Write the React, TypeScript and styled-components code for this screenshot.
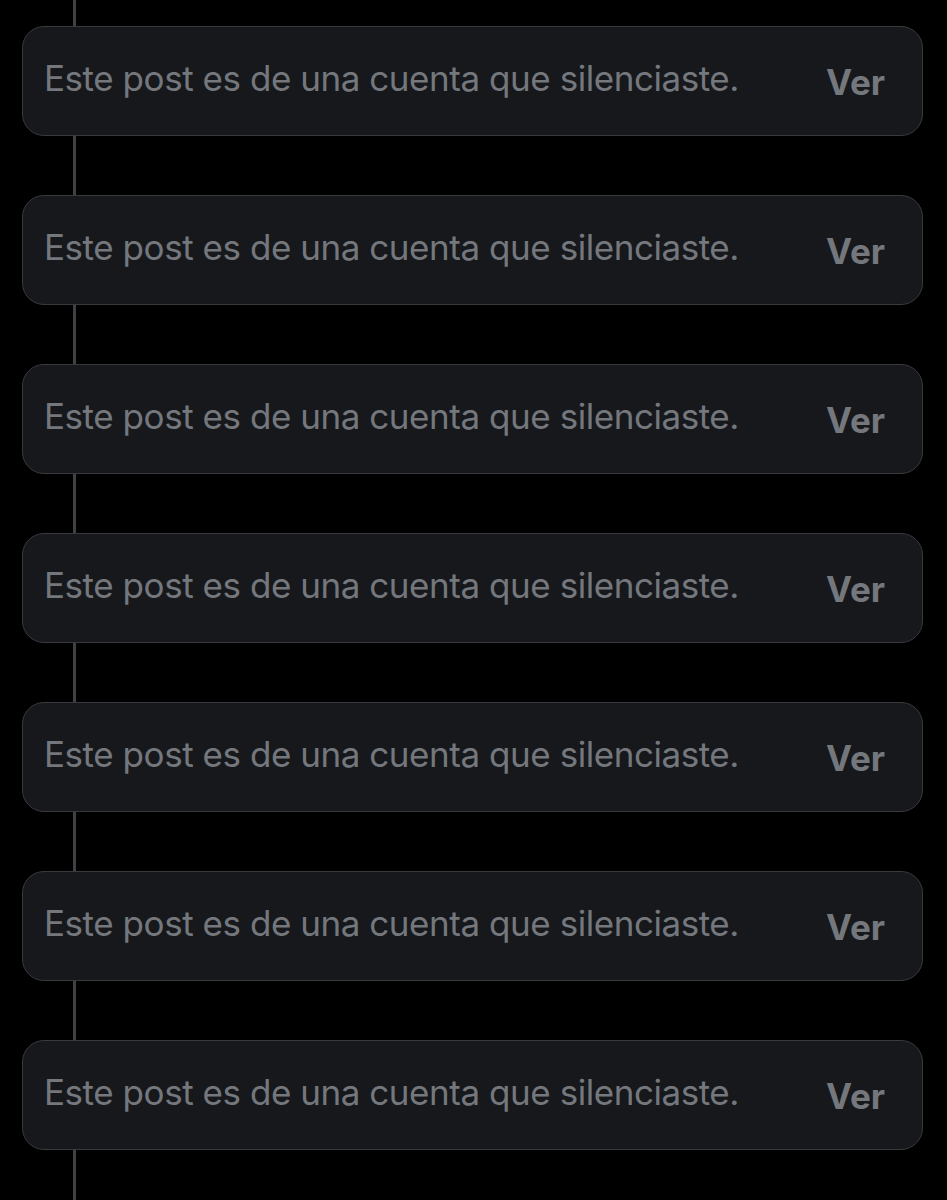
import React from "react";
import styled, { createGlobalStyle } from "styled-components";

const Global = createGlobalStyle`
  html, body { margin: 0; padding: 0; background: #000; }
  body { font-family: Inter, "Noto Sans", sans-serif; -webkit-font-smoothing: antialiased; }
`;

const Thread = styled.div`
  min-height: 1200px;
  box-sizing: border-box;
  padding: 26px 24px 0 22px;
  display: flex;
  flex-direction: column;
  gap: 59px;
  background-color: #000;
  background-image: linear-gradient(#404144, #404144);
  background-size: 3px 100%;
  background-position: 73px 0;
  background-repeat: no-repeat;
`;

const Card = styled.div`
  height: 110px;
  box-sizing: border-box;
  border: 1px solid #393a3e;
  border-radius: 22px;
  background: #16181c;
  display: flex;
  align-items: center;
  justify-content: space-between;
  padding: 0 37px 0 21px;
`;

const Message = styled.span`
  font-size: 35px;
  color: #74777c;
  letter-spacing: -0.45px;
  line-height: 1;
  padding-bottom: 6px;
`;

const ViewButton = styled.span`
  font-size: 35px;
  font-weight: 700;
  color: #74777c;
  line-height: 1;
  padding-top: 2px;
`;

export default function App() {
  const items = Array.from({ length: 7 });
  return (
    <>
      <Global />
      <Thread>
        {items.map((_, i) => (
          <Card key={i}>
            <Message>Este post es de una cuenta que silenciaste.</Message>
            <ViewButton>Ver</ViewButton>
          </Card>
        ))}
      </Thread>
    </>
  );
}
